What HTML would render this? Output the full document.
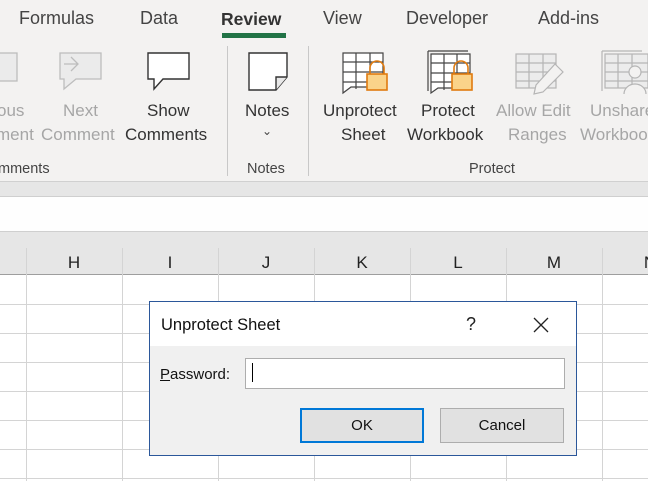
<!DOCTYPE html>
<html><head><meta charset="utf-8"><style>
*{margin:0;padding:0;box-sizing:border-box}
body{width:648px;height:481px;overflow:hidden;position:relative;background:#fff;font-family:"Liberation Sans",sans-serif;color:#262626}
.a{position:absolute;white-space:nowrap}
.rb{position:absolute;left:0;top:0;width:648px;height:181px;background:#f3f2f1}
.t{font-size:18px;top:8px;color:#444}
.l{font-size:17px;color:#333;text-align:center}
.g{color:#a6a6a6}
.gl{font-size:14.5px;color:#444;top:161px}
.sep{position:absolute;width:1px;background:#c8c8c8;top:46px;height:130px}
.vl{position:absolute;width:1px;background:#d4d4d4;top:248px;height:233px}
.hl{position:absolute;left:0;width:648px;height:1px;background:#d4d4d4}
.ch{font-size:17px;top:253px;color:#222;text-align:center;width:96px}
</style></head><body>
<div class="rb"></div>
<div class="a t" style="left:19px">Formulas</div>
<div class="a t" style="left:140px">Data</div>
<div class="a t" style="left:221px;color:#333;font-weight:bold;font-size:17.5px;top:9px">Review</div>
<div class="a" style="left:222px;top:33px;width:64px;height:5px;background:#217346"></div>
<div class="a t" style="left:323px">View</div>
<div class="a t" style="left:406px">Developer</div>
<div class="a t" style="left:538px">Add-ins</div>

<svg class="a" style="left:0;top:0" width="648" height="160">
<g fill="#ebebeb" stroke="#bdbdbd" stroke-width="1.3">
<rect x="-5" y="53" width="22" height="28"/>
<path d="M60 53h41v26H76l-12 10v-10h-4z"/>
<path d="M64 64h14M71 57l7 7-7 7" fill="none"/>
</g>
<g fill="#fff" stroke="#333" stroke-width="1.4">
<path d="M148 53h41v26h-26l-9 10v-10h-6z"/>
<path d="M249 53h38v24l-11 13h-27z"/><path d="M276 90v-13h11" fill="#e8e8e8"/>
</g>
<g stroke="#444" stroke-width="1.2" fill="#fff">
<path d="M343 53h40v34h-32l-8 6z"/><path d="M343 62h40M343 72h40M343 82h30M356 53v36M370 53v36" fill="none"/>
<path d="M428 51h40M428 51v40" fill="none"/>
<path d="M431 54h39v34h-32l-7 5z"/><path d="M431 63h39M431 73h39M431 82h30M444 54v36M457 54v36" fill="none"/>
</g>
<g stroke="#e07b10" stroke-width="1.6" fill="#fad38a">
<path d="M370 74v-6a7 7 0 0 1 14 0v6" fill="none"/><rect x="367" y="74" width="20" height="16"/>
<path d="M454 74v-6a7 7 0 0 1 14 0v6" fill="none"/><rect x="452" y="74" width="20" height="16"/>
</g>
<g stroke="#b5b5b5" stroke-width="1.2" fill="#ececec">
<rect x="516" y="54" width="40" height="34"/><path d="M516 63h40M516 72h40M516 81h40M529 54v34M543 54v34" fill="none"/>
<path d="M555 64l8 8-20 20-9 2 2-9z" fill="#f3f2f1"/>
<path d="M602 51h40M602 51v40" fill="none"/>
<rect x="605" y="54" width="43" height="34"/><path d="M605 63h43M605 72h43M605 81h43M618 54v34M632 54v34" fill="none"/>
<circle cx="635" cy="72" r="6" fill="#f3f2f1"/><path d="M624 94a11 10 0 0 1 22 0" fill="#f3f2f1"/>
</g>
</svg>

<div class="a l g" style="left:-3px;top:101px">ous</div>
<div class="a l g" style="left:-4px;top:125px">ment</div>
<div class="a l g" style="left:63px;top:101px">Next</div>
<div class="a l g" style="left:41px;top:125px">Comment</div>
<div class="a l" style="left:147px;top:101px">Show</div>
<div class="a l" style="left:125px;top:125px">Comments</div>
<div class="a gl" style="left:-2px">mments</div>
<div class="sep" style="left:227px"></div>
<div class="a l" style="left:245px;top:101px">Notes</div>
<div class="a" style="left:262px;top:124px;font-size:12px;color:#444">⌄</div>
<div class="a gl" style="left:247px">Notes</div>
<div class="sep" style="left:308px"></div>
<div class="a l" style="left:323px;top:101px">Unprotect</div>
<div class="a l" style="left:341px;top:125px">Sheet</div>
<div class="a l" style="left:421px;top:101px">Protect</div>
<div class="a l" style="left:407px;top:125px">Workbook</div>
<div class="a l g" style="left:496px;top:101px">Allow Edit</div>
<div class="a l g" style="left:508px;top:125px">Ranges</div>
<div class="a l g" style="left:590px;top:101px">Unshare</div>
<div class="a l g" style="left:580px;top:125px">Workbook</div>
<div class="a gl" style="left:469px">Protect</div>

<div class="a" style="left:0;top:181px;width:648px;height:16px;background:#e6e6e6;border-top:1px solid #d0d0d0;border-bottom:1px solid #cfcfcf"></div>
<div class="a" style="left:0;top:197px;width:648px;height:34px;background:#fefefe"></div>
<div class="a" style="left:0;top:231px;width:648px;height:44px;background:#e6e6e6;border-top:1px solid #cfcfcf;border-bottom:1px solid #9e9e9e"></div>
<div class="vl" style="left:26px"></div><div class="vl" style="left:122px"></div><div class="vl" style="left:218px"></div><div class="vl" style="left:314px"></div><div class="vl" style="left:410px"></div><div class="vl" style="left:506px"></div><div class="vl" style="left:602px"></div>
<div class="hl" style="top:304px"></div><div class="hl" style="top:333px"></div><div class="hl" style="top:362px"></div><div class="hl" style="top:391px"></div><div class="hl" style="top:420px"></div><div class="hl" style="top:449px"></div><div class="hl" style="top:478px"></div>
<div class="a ch" style="left:26px">H</div><div class="a ch" style="left:122px">I</div><div class="a ch" style="left:218px">J</div><div class="a ch" style="left:314px">K</div><div class="a ch" style="left:410px">L</div><div class="a ch" style="left:506px">M</div><div class="a ch" style="left:602px">N</div>

<div class="a" style="left:149px;top:301px;width:428px;height:155px;border:1px solid #2b579a;background:#f0f0f0">
<div class="a" style="left:0;top:0;width:426px;height:44px;background:#fff"></div>
<div class="a" style="left:11px;top:14px;font-size:16.5px;color:#111">Unprotect Sheet</div>
<div class="a" style="left:316px;top:12px;font-size:18px;color:#222">?</div>
<svg class="a" style="left:383px;top:15px" width="16" height="16"><path d="M1 1l14 14M15 1L1 15" stroke="#222" stroke-width="1.3"/></svg>
<div class="a" style="left:10px;top:64px;font-size:15px;color:#111"><u>P</u>assword:</div>
<div class="a" style="left:95px;top:56px;width:320px;height:31px;background:#fff;border:1px solid #adadad"></div>
<div class="a" style="left:102px;top:61px;width:1px;height:19px;background:#000"></div>
<div class="a" style="left:150px;top:106px;width:124px;height:35px;background:#e1e1e1;border:2px solid #0078d7;font-size:15px;text-align:center;line-height:31px;color:#111">OK</div>
<div class="a" style="left:290px;top:106px;width:124px;height:35px;background:#e1e1e1;border:1px solid #adadad;font-size:15px;text-align:center;line-height:33px;color:#111">Cancel</div>
</div>
</body></html>
